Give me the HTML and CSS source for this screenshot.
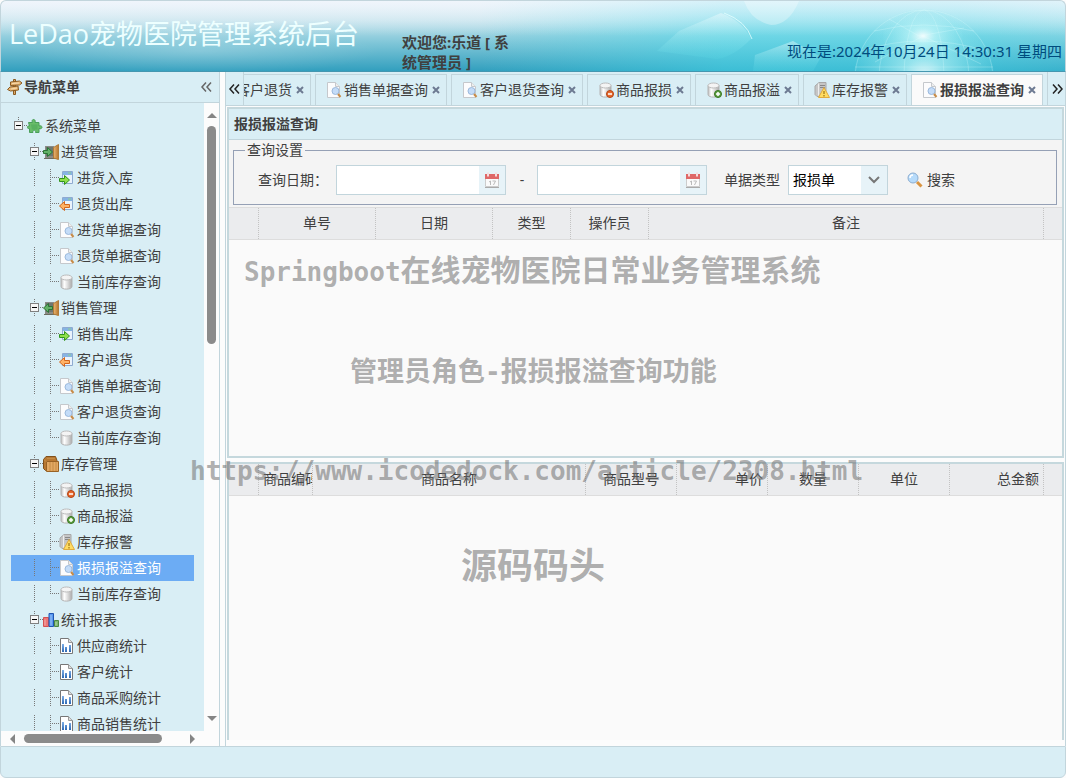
FILE: index.html
```html
<!DOCTYPE html>
<html lang="zh-CN">
<head>
<meta charset="utf-8">
<title>LeDao宠物医院管理系统后台</title>
<link rel="stylesheet" href="styles.css">
</head>
<body>
<svg class="sprite" aria-hidden="true">
  <defs>
    <linearGradient id="cyl"><stop offset="0" stop-color="#bbb"/><stop offset=".3" stop-color="#fff"/><stop offset=".6" stop-color="#ddd"/><stop offset="1" stop-color="#aaa"/></linearGradient>
    <linearGradient id="wood"><stop offset="0" stop-color="#e8b675"/><stop offset="1" stop-color="#b8762c"/></linearGradient>
    <linearGradient id="bar" x2="0" y2="1"><stop offset="0" stop-color="#7fb0e8"/><stop offset="1" stop-color="#2c68b4"/></linearGradient>
  </defs>
  <symbol id="sign" viewBox="0 0 16 16"><path d="M6.500 .5h2v15h-2z" fill="#d9a86a" stroke="#8a5a20"/><path d="M3.500 3l9-1 2.500 2-2.500 2-9 .5zM11 7l-8 1-2.500 2.500L3.500 12l8-1z" fill="#e8b877" stroke="#8a5a20"/><path d="M5 4.500l7-.5M4 10l6-1" stroke="#f8dcae"/></symbol>
  <symbol id="puzzle" viewBox="0 0 16 16"><path d="M1.500 4.500h4c-2-4 4-4 2.500 0h4v3.500c4-1.500 4 4 0 2.500v4H8.500c1-3-3.500-3-2.500 0H2.500v-4c-3 .5-3-3 0-2.500z" fill="#69bd69" stroke="#4a9f5a"/><path d="M4 6.500h6.500v5H5z" fill="#4fa85a" opacity=".6"/></symbol>
  <symbol id="door" viewBox="0 0 16 16"><path d="M2 2h9v12H2z" fill="#8b8b86"/><path d="M3 3h7v9H3z" fill="#6e7671"/><path d="M1 14.500h13" stroke="#6b6b60"/><path d="M10.500 3.500l5-3v15l-5-1.500z" fill="url(#wood)" stroke="#b07a38"/></symbol>
  <symbol id="door-in" viewBox="0 0 16 16"><use href="#door"/><path d="M.5 6.500h4v-3l5 4.500-5 4.500v-3h-4z" fill="#62b167" stroke="#2a7535"/></symbol>
  <symbol id="door-out" viewBox="0 0 16 16"><use href="#door"/><path d="M9.500 6.500h-4v-3L.5 8l5 4.500v-3h4z" fill="#62b167" stroke="#2a7535"/></symbol>
  <symbol id="box" viewBox="0 0 16 16"><path d="M.5 3.500L3 .5h9.500l1.500 4v10H2.500l-2-2z" fill="#b87832" stroke="#80501b"/><path d="M3.500 5.500h12v10h-12z" fill="#e3a964" stroke="#996225"/><path d="M1 4l2.500 1.500M7 6v9M10 6v9M13 6v9M4 2.500h8" stroke="#c48b45"/></symbol>
  <symbol id="chart" viewBox="0 0 16 16"><path d="M.5 5.500h5v9h-5z" fill="#ec7676" stroke="#d45050"/><path d="M6 1.500h4.500v13H6z" fill="#5a9af0" stroke="#2155b0"/><path d="M11.500 8.500h4v6h-4z" fill="#7db872" stroke="#4b8843"/><path d="M2 7.500v6M8 3v10.500M13 10v3.500" stroke="#fff" opacity=".4"/></symbol>
  <symbol id="window" viewBox="0 0 16 16"><path d="M3.500 1.500h10v12h-10z" fill="#eaf3fc" stroke="#8fabd0"/><path d="M4 2h9v3H4z" fill="#86b4e4"/><path d="M9 3h3" stroke="#8fd08b"/></symbol>
  <symbol id="form-in" viewBox="0 0 16 16"><use href="#window"/><path d="M.5 8.500h5v-3l5 4.500-5 4.500v-3h-5z" fill="#8fe04a" stroke="#31941c"/></symbol>
  <symbol id="form-out" viewBox="0 0 16 16"><use href="#window"/><path d="M10.500 8.500h-5v-3L.5 10l5 4.500v-3h5z" fill="#ffb266" stroke="#d3651b"/></symbol>
  <symbol id="doc" viewBox="0 0 16 16"><path d="M1.500 .5h8l4 4v11h-12z" fill="#fcfcfd" stroke="#c5c8cc"/><path d="M9.500 .5v4h4" fill="#eee" stroke="#c5c8cc"/><circle cx="9.500" cy="9" r="3.500" fill="#c4dcf8" stroke="#9bb9dc"/><path d="M12 12l2.500 3" stroke="#c78c49" stroke-width="2"/></symbol>
  <symbol id="db" viewBox="0 0 16 16"><path d="M2 3.500v9c0 3.500 11 3.500 11 0v-9z" fill="url(#cyl)" stroke="#b4b4b4"/><ellipse cx="7.500" cy="3.500" rx="5.500" ry="2.500" fill="#f4f4f4" stroke="#bcbcbc"/></symbol>
  <symbol id="db-minus" viewBox="0 0 16 16"><use href="#db"/><circle cx="12" cy="12" r="3.500" fill="#e8692d" stroke="#b44313"/><path d="M10 12h4" stroke="#fff" stroke-width="1.500"/></symbol>
  <symbol id="db-plus" viewBox="0 0 16 16"><use href="#db"/><circle cx="12" cy="12" r="3.500" fill="#62a246" stroke="#36751f"/><path d="M10 12h4M12 10v4" stroke="#fff" stroke-width="1.500"/></symbol>
  <symbol id="warn" viewBox="0 0 16 16"><path d="M1 4l4-3.500h7v14H3l-2-2z" fill="#c6c6c6" stroke="#a8a8a8"/><path d="M4.500 1.500v12" stroke="#eee"/><path d="M6 3.500h5M6 5.500h5" stroke="#888"/><path d="M10 5.500l5.500 10h-11z" fill="#ffdc62" stroke="#e0ab3e"/><path d="M10 9v3M10 13v1.500" stroke="#8a6100"/></symbol>
  <symbol id="report" viewBox="0 0 16 16"><path d="M1.500 .5h8l4 4v11h-12z" fill="#fff" stroke="#777"/><path d="M9.500 .5v4h4" fill="#ddd" stroke="#999"/><path d="M3 6h2v8H3zM6 9h2v5H6zM10 7h2v7h-2z" fill="url(#bar)"/></symbol>
  <symbol id="calendar" viewBox="0 0 16 16"><path d="M1.500 2.500h13v12h-13z" fill="#fafafa" stroke="#ccc"/><path d="M1 2h14v5H1z" fill="#df6868"/><path d="M4 .5v4M12 .5v4" stroke="#f6dddd" stroke-width="2"/><path d="M5 10l1.500-1v4M8.500 9h3l-2 4" fill="none" stroke="#bbb"/><path d="M1 15.500h14" stroke="#aaa"/></symbol>
  <symbol id="search" viewBox="0 0 16 16"><path d="M10 10l4.500 4.500" stroke="#d99441" stroke-width="3"/><circle cx="6" cy="6" r="5" fill="#b6dbfb" stroke="#8cadd0"/><path d="M3 6c0-2 1.500-3 3-3" stroke="#fff" fill="none" stroke-width="1.500"/></symbol>
  <symbol id="left2" viewBox="0 0 16 16"><path d="M8 3.500L4 8l4 4.500M13 3.500L9 8l4 4.500" fill="none" stroke="currentColor" stroke-width="1.500"/></symbol>
  <symbol id="right2" viewBox="0 0 16 16"><path d="M4 3.500L8 8l-4 4.500M9 3.500L13 8l-4 4.500" fill="none" stroke="currentColor" stroke-width="1.500"/></symbol>
  <symbol id="close" viewBox="0 0 8 8"><path d="M1 1l6 6M7 1L1 7" stroke="#6d7a92" stroke-width="2"/></symbol>
</svg>

<header class="banner">
  <svg class="banner-art" viewBox="0 0 536 70" preserveAspectRatio="xMaxYMid slice" aria-hidden="true">
    <defs>
      <radialGradient id="glow"><stop offset="0" stop-color="#fff" stop-opacity=".9"/><stop offset=".3" stop-color="#c9f8fa" stop-opacity=".6"/><stop offset="1" stop-color="#8fe6ee" stop-opacity=".1"/></radialGradient>
      <linearGradient id="key" x2="0" y2="1"><stop offset="0" stop-color="#fff" stop-opacity=".4"/><stop offset="1" stop-color="#5fe0ea" stop-opacity=".15"/></linearGradient>
    </defs>
    <path d="M150 30l42-18q22 8 30 26-18 18-34 20l-60-8z" fill="url(#key)"/>
    <path d="M195 12q22 8 28 26" fill="none" stroke="#e6ffff" stroke-opacity=".8"/>
    <path d="M215 0h55q-10 24-28 24-20-4-27-24z" fill="#fff" opacity=".3"/>
    <path d="M226 54l38-14 28 16-8 14h-60z" fill="url(#key)"/>
    <circle cx="395" cy="78" r="70" fill="url(#glow)"/>
    <ellipse cx="394" cy="35" rx="40" ry="26" fill="url(#glow)"/>
    <g fill="none" stroke="#e4ffff" stroke-opacity=".25">
      <circle cx="395" cy="78" r="69"/><ellipse cx="395" cy="78" rx="45" ry="69"/><ellipse cx="395" cy="78" rx="20" ry="69"/>
      <path d="M332 50q60-20 126 0M326 66h138M345 30q50-12 100 0M360 18l30 17 45-8M394 35l-48 26M394 35l58 28" />
    </g>
  </svg>
  <h1 class="brand">LeDao宠物医院管理系统后台</h1>
  <p class="welcome">欢迎您:乐道 [ 系统管理员 ]</p>
  <p class="clock">现在是:2024年10月24日 14:30:31 星期四</p>
</header>

<div class="body">
  <aside class="side">
    <div class="side-head"><svg class="ico"><use href="#sign"/></svg><h2>导航菜单</h2><button class="fold" aria-label="收起"><svg class="ico"><use href="#left2"/></svg></button></div>
    <div class="side-view">
      <nav class="tree">
        <a class="row top" href="#"><i class="hit"></i><svg class="ico"><use href="#puzzle"/></svg><span>系统菜单</span></a>
        <a class="row" href="#"><i></i><i class="hit"></i><svg class="ico"><use href="#door-in"/></svg><span>进货管理</span></a>
        <a class="row" href="#"><i></i><i class="line"></i><i class="join"></i><svg class="ico"><use href="#form-in"/></svg><span>进货入库</span></a>
        <a class="row" href="#"><i></i><i class="line"></i><i class="join"></i><svg class="ico"><use href="#form-out"/></svg><span>退货出库</span></a>
        <a class="row" href="#"><i></i><i class="line"></i><i class="join"></i><svg class="ico"><use href="#doc"/></svg><span>进货单据查询</span></a>
        <a class="row" href="#"><i></i><i class="line"></i><i class="join"></i><svg class="ico"><use href="#doc"/></svg><span>退货单据查询</span></a>
        <a class="row" href="#"><i></i><i class="line"></i><i class="join end"></i><svg class="ico"><use href="#db"/></svg><span>当前库存查询</span></a>
        <a class="row" href="#"><i></i><i class="hit"></i><svg class="ico"><use href="#door-out"/></svg><span>销售管理</span></a>
        <a class="row" href="#"><i></i><i class="line"></i><i class="join"></i><svg class="ico"><use href="#form-in"/></svg><span>销售出库</span></a>
        <a class="row" href="#"><i></i><i class="line"></i><i class="join"></i><svg class="ico"><use href="#form-out"/></svg><span>客户退货</span></a>
        <a class="row" href="#"><i></i><i class="line"></i><i class="join"></i><svg class="ico"><use href="#doc"/></svg><span>销售单据查询</span></a>
        <a class="row" href="#"><i></i><i class="line"></i><i class="join"></i><svg class="ico"><use href="#doc"/></svg><span>客户退货查询</span></a>
        <a class="row" href="#"><i></i><i class="line"></i><i class="join end"></i><svg class="ico"><use href="#db"/></svg><span>当前库存查询</span></a>
        <a class="row" href="#"><i></i><i class="hit"></i><svg class="ico"><use href="#box"/></svg><span>库存管理</span></a>
        <a class="row" href="#"><i></i><i class="line"></i><i class="join"></i><svg class="ico"><use href="#db-minus"/></svg><span>商品报损</span></a>
        <a class="row" href="#"><i></i><i class="line"></i><i class="join"></i><svg class="ico"><use href="#db-plus"/></svg><span>商品报溢</span></a>
        <a class="row" href="#"><i></i><i class="line"></i><i class="join"></i><svg class="ico"><use href="#warn"/></svg><span>库存报警</span></a>
        <a class="row selected" href="#" aria-current="page"><i></i><i class="line"></i><i class="join"></i><svg class="ico"><use href="#doc"/></svg><span>报损报溢查询</span></a>
        <a class="row" href="#"><i></i><i class="line"></i><i class="join end"></i><svg class="ico"><use href="#db"/></svg><span>当前库存查询</span></a>
        <a class="row" href="#"><i></i><i class="hit"></i><svg class="ico"><use href="#chart"/></svg><span>统计报表</span></a>
        <a class="row" href="#"><i></i><i class="line"></i><i class="join"></i><svg class="ico"><use href="#report"/></svg><span>供应商统计</span></a>
        <a class="row" href="#"><i></i><i class="line"></i><i class="join"></i><svg class="ico"><use href="#report"/></svg><span>客户统计</span></a>
        <a class="row" href="#"><i></i><i class="line"></i><i class="join"></i><svg class="ico"><use href="#report"/></svg><span>商品采购统计</span></a>
        <a class="row" href="#"><i></i><i class="line"></i><i class="join"></i><svg class="ico"><use href="#report"/></svg><span>商品销售统计</span></a>
      </nav>
      <div class="vbar"><b class="arrow up"></b><div class="track"><b class="thumb"></b></div><b class="arrow down"></b></div>
      <div class="hbar"><b class="arrow left"></b><div class="track"><b class="thumb"></b></div><b class="arrow right"></b></div>
    </div>
  </aside>

  <main class="main">
    <div class="tabbar">
      <button class="scroller" aria-label="向左滚动"><svg class="ico"><use href="#left2"/></svg></button>
      <ul class="tabs">
        <li class="tab"><svg class="ico"><use href="#form-out"/></svg><a href="#">客户退货</a><button class="x" aria-label="关闭"><svg><use href="#close"/></svg></button></li>
        <li class="tab"><svg class="ico"><use href="#doc"/></svg><a href="#">销售单据查询</a><button class="x" aria-label="关闭"><svg><use href="#close"/></svg></button></li>
        <li class="tab"><svg class="ico"><use href="#doc"/></svg><a href="#">客户退货查询</a><button class="x" aria-label="关闭"><svg><use href="#close"/></svg></button></li>
        <li class="tab"><svg class="ico"><use href="#db-minus"/></svg><a href="#">商品报损</a><button class="x" aria-label="关闭"><svg><use href="#close"/></svg></button></li>
        <li class="tab"><svg class="ico"><use href="#db-plus"/></svg><a href="#">商品报溢</a><button class="x" aria-label="关闭"><svg><use href="#close"/></svg></button></li>
        <li class="tab"><svg class="ico"><use href="#warn"/></svg><a href="#">库存报警</a><button class="x" aria-label="关闭"><svg><use href="#close"/></svg></button></li>
        <li class="tab active"><svg class="ico"><use href="#doc"/></svg><a href="#">报损报溢查询</a><button class="x" aria-label="关闭"><svg><use href="#close"/></svg></button></li>
      </ul>
      <button class="scroller end" aria-label="向右滚动"><svg class="ico"><use href="#right2"/></svg></button>
    </div>

    <div class="content">
      <section class="panel list">
        <h2 class="panel-title">报损报溢查询</h2>
        <form class="query">
          <fieldset>
            <legend>查询设置</legend>
            <div class="fields">
              <label for="from">查询日期：</label>
              <span class="date"><input id="from" type="text"><button type="button" aria-label="选择开始日期"><svg class="ico"><use href="#calendar"/></svg></button></span>
              <span class="dash">-</span>
              <span class="date"><input id="to" type="text" aria-label="结束日期"><button type="button" aria-label="选择结束日期"><svg class="ico"><use href="#calendar"/></svg></button></span>
              <label class="kind" for="type">单据类型</label>
              <span class="combo"><select id="type"><option>报损单</option><option>报溢单</option></select><svg viewBox="0 0 12 8" aria-hidden="true"><path d="M1 1l5 5 5-5" fill="none" stroke="#777" stroke-width="2"/></svg></span>
              <button class="go" type="button"><svg class="ico"><use href="#search"/></svg>搜索</button>
            </div>
          </fieldset>
        </form>
        <table class="grid">
          <thead><tr><th class="w30"></th><th class="w117">单号</th><th class="w117">日期</th><th class="w78">类型</th><th class="w78">操作员</th><th>备注</th><th class="rest"></th></tr></thead>
        </table>
      </section>
      <section class="panel detail">
        <table class="grid">
          <thead><tr><th class="w30"></th><th class="w54 start">商品编码</th><th>商品名称</th><th class="w91">商品型号</th><th class="w91 right-text">单价</th><th class="w91">数量</th><th class="w91">单位</th><th class="w94 right-text">总金额</th><th class="rest"></th></tr></thead>
        </table>
      </section>
    </div>
  </main>
</div>

<footer class="foot"></footer>

<div class="mark mark-name"><span class="mono">Springboot</span>在线宠物医院日常业务管理系统</div>
<div class="mark mark-role">管理员角色<span class="mono">-</span>报损报溢查询功能</div>
<div class="mark mark-link mono">https://www.icodedock.com/article/2308.html</div>
<div class="mark mark-team">源码码头</div>
</body>
</html>
```
FILE: styles.css
```css
* { box-sizing: border-box; }

body {
  display: flex;
  flex-direction: column;
  height: 100vh;
  margin: 0;
  position: relative;
  overflow: hidden;
  background: #fcfcfc;
  color: #404040;
  font: 14px/20px "Noto Sans", "Noto Sans CJK SC", sans-serif;
}

h1, h2, p, ul { margin: 0; padding: 0; }
a { color: inherit; text-decoration: none; }
button, input, select { font: inherit; color: inherit; border: 0; padding: 0; background: none; }
.sprite { position: absolute; width: 0; height: 0; }
.ico { width: 16px; height: 16px; flex: none; display: block; }

/* Banner */
.banner {
  display: flex;
  flex: none;
  height: 72px;
  position: relative;
  overflow: hidden;
  border: 1px solid #c2d5dc;
  border-bottom-color: #4597b0;
  border-radius: 6px 6px 0 0;
  background:
    radial-gradient(ellipse 180px 24px at 200px 50px, rgba(255, 255, 255, .2), transparent),
    linear-gradient(rgba(240, 245, 252, .7), transparent 50%),
    linear-gradient(90deg, transparent 45%, rgba(70, 220, 236, .5) 68%, rgba(70, 220, 236, .5) 90%, rgba(70, 220, 236, .3)),
    linear-gradient(#eef5fa, #c4e3ec 28%, #7fc6d8 60%, #329fbe);
}
.banner-art { position: absolute; top: 0; right: 0; width: 536px; height: 100%; }
.brand {
  width: 400px;
  padding: 13px 0 0 8px;
  color: #edffff;
  font-size: 27px;
  line-height: 40px;
  font-weight: 400;
  font-family: "Open Sans", "Noto Sans CJK SC", sans-serif;
}
.welcome { width: 120px; padding: 31px 0 0 1px; font-size: 15px; font-weight: 700; }
.clock {
  position: relative;
  margin-left: auto;
  padding: 40px 3px 0 0;
  color: #004c7e;
  font-size: 15px;
  white-space: nowrap;
}

.body { display: flex; flex: 1; min-height: 0; gap: 5px; }

/* Side menu */
.side { display: flex; flex-direction: column; width: 220px; flex: none; border: solid #c2d5dc; border-width: 0 1px; }
.side-head {
  display: flex;
  align-items: center;
  gap: 1px;
  height: 31px;
  flex: none;
  padding: 0 5px 0 6px;
  background: #d9eef5;
  border-bottom: 1px solid #c2d5dc;
}
.side-head h2, .panel-title { font-size: 14px; font-weight: 700; }
.fold { margin-left: auto; color: #666; }
.side-view { display: grid; grid-template: minmax(0, 1fr) 15px / minmax(0, 1fr) 15px; flex: 1; min-height: 0; }
.tree { overflow: hidden; padding: 10px; background: #d9eef5; }
.row { display: flex; align-items: center; height: 26px; white-space: nowrap; }
.row span { padding-left: 2px; }
.row i { width: 16px; height: 18px; flex: none; }
.row.selected { background: #6cacf4; color: #fff; }
.line, .join { background: linear-gradient(#777 50%, transparent 50%) 7px 0 / 1px 2px repeat-y; }
.join {
  background:
    linear-gradient(#777 50%, transparent 50%) 7px 0 / 1px 2px repeat-y,
    linear-gradient(90deg, #777 50%, transparent 50%) 7px 8px / 2px 1px repeat-x;
  clip-path: inset(0 0 0 7px);
}
.join.end { clip-path: polygon(7px 0, 100% 0, 100% 9px, 7px 9px); }
.hit {
  background:
    linear-gradient(#000, #000) 5px 8px / 5px 1px no-repeat,
    linear-gradient(#f6f6f6, #f6f6f6) 4px 5px / 7px 7px no-repeat,
    linear-gradient(#808080, #808080) 3px 4px / 9px 9px no-repeat,
    linear-gradient(90deg, #777 50%, transparent 50%) 13px 8px / 2px 1px repeat-x,
    linear-gradient(#777 50%, transparent 50%) 7px 0 / 1px 2px repeat-y;
  clip-path: inset(0 0 0 3px);
}
.top .hit { clip-path: inset(0 0 5px 3px); }

.vbar, .hbar { display: flex; align-items: center; }
.vbar { flex-direction: column; padding: 10px 0; }
.hbar { padding: 0 9px; }
.track { flex: 1; display: flex; }
.thumb { background: #8b8b8b; border-radius: 5px; }
.vbar .track { width: 9px; padding-top: 8px; }
.vbar .thumb { width: 9px; height: 37%; }
.hbar .track { height: 9px; padding-left: 9px; }
.hbar .thumb { width: 83%; height: 9px; }
.arrow { border: 5px solid transparent; }
.up { border-top: 0; border-bottom-color: #858585; }
.down { border-bottom: 0; border-top-color: #858585; }
.left { border-left: 0; border-right-color: #858585; }
.right { border-right: 0; border-left-color: #858585; }

/* Tabs */
.main { display: flex; flex-direction: column; flex: 1; min-width: 0; border: solid #c2d5dc; border-width: 0 1px; }
.tabbar { display: flex; height: 34px; flex: none; background: #d9eef5; border-bottom: 1px solid #c2d5dc; }
.scroller { width: 18px; flex: none; color: #222; border-right: 1px solid #c2d5dc; }
.scroller.end { border-right: 0; border-left: 1px solid #c2d5dc; padding-left: 1px; }
.tabs { display: flex; flex: 1; min-width: 0; justify-content: flex-end; gap: 4px; padding: 2px 4px 0 0; list-style: none; overflow: hidden; }
.tab {
  display: flex;
  align-items: center;
  flex: none;
  gap: 2px;
  padding: 0 6px 0 10px;
  border: 1px solid #c2d5dc;
  border-bottom: 0;
  white-space: nowrap;
}
.tab.active { background: #fafafa; font-weight: 700; }
.x { padding-left: 2px; }
.x svg { display: block; width: 8px; height: 8px; }

/* Content */
.content { display: flex; flex-direction: column; flex: 1; min-height: 0; gap: 4px; padding: 1px 1px 6px; }
.panel { border: 2px solid #c5d8dd; background: #fafafa; overflow: hidden; min-height: 0; }
.list { flex: 350 0 0; }
.detail { flex: 279 0 0; border-bottom: 0; }
.panel-title { height: 31px; padding: 5px; background: #d9eef5; border-bottom: 1px solid #c2d5dc; }
.query { padding: 0 5px 2px 4px; background: #f4f4f4; }
fieldset { margin: 0; padding: 0 11px; height: 65px; border: 1px solid #95a0b5; min-width: 0; }
legend { padding: 0 2px; line-height: 20px; }
.fields { display: flex; align-items: center; padding: 5px 13px 0; white-space: nowrap; }
.date, .combo { display: flex; height: 30px; border: 1px solid #c2d5dc; background: #fff; }
.date { width: 170px; margin-left: 8px; }
.date input { flex: 1; min-width: 0; padding: 0 4px; }
.date button { display: grid; place-items: center; width: 26px; background: #e7f3f8; }
.dash { width: 23px; padding-left: 9px; text-align: center; }
.kind { margin-left: 17px; }
.combo { position: relative; width: 100px; margin-left: 8px; }
.combo select { width: 100%; padding-left: 4px; color: #000; appearance: none; background: linear-gradient(#e7f3f8, #e7f3f8) right / 26px 100% no-repeat; }
.combo svg { position: absolute; right: 7px; top: 10px; width: 12px; height: 8px; pointer-events: none; }
.go { display: flex; align-items: center; gap: 4px; margin-left: 19px; }

.grid { width: 100%; table-layout: fixed; border-collapse: separate; border-spacing: 0; background: #ebecee; border: solid #dddddd; border-width: 1px 0; }
.grid th { height: 31px; padding: 0 4px 2px; font-weight: 400; white-space: nowrap; overflow: hidden; border-right: 1px dotted #c3c3c3; text-align: center; }
.detail .grid { border-top: 0; }
.detail .grid th { padding-bottom: 0; }
.grid .start { text-align: left; padding-right: 0; }
.grid .right-text { text-align: right; }
.w30 { width: 30px; }
.w54 { width: 54px; }
.w78 { width: 78px; }
.w91 { width: 91px; }
.w94 { width: 94px; }
.w117 { width: 117px; }
.grid .rest { width: 18px; border-right: 0; }

.foot { flex: none; height: 32px; background: #d9eef5; border: 1px solid #c2d5dc; border-radius: 0 0 6px 6px; }

/* Overlaid marks */
.mark {
  position: absolute;
  color: rgba(110, 110, 110, .55);
  font-family: "Noto Sans CJK SC", sans-serif;
  font-weight: 700;
  line-height: 40px;
  white-space: nowrap;
  pointer-events: none;
}
.mono { font-family: "DejaVu Sans Mono", monospace; font-size: 26px; }
.mark-name { left: 244px; top: 248px; font-size: 30px; }
.mark-role { left: 350px; top: 350px; font-size: 27px; }
.mark-link { left: 190px; top: 451px; }
.mark-team { left: 461px; top: 543px; font-size: 36px; }
```
